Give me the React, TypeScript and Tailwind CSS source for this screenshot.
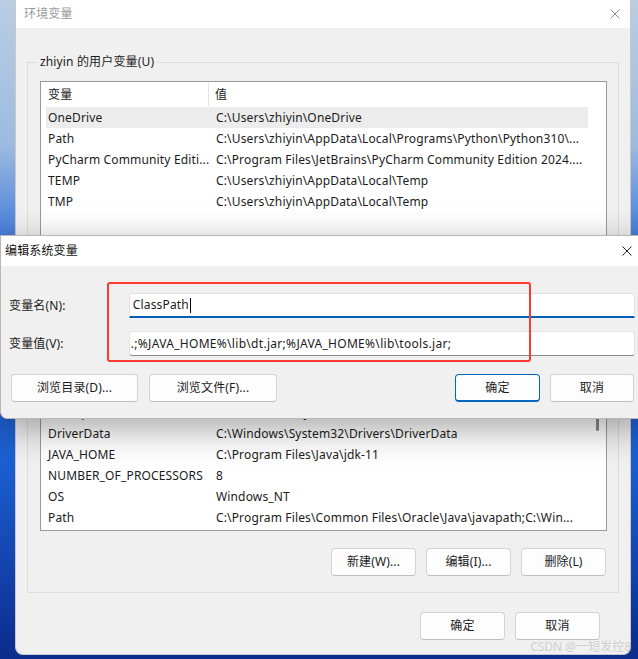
import React from "react";

const userVars: [string, string][] = [
  ["OneDrive", "C:\\Users\\zhiyin\\OneDrive"],
  ["Path", "C:\\Users\\zhiyin\\AppData\\Local\\Programs\\Python\\Python310\\..."],
  ["PyCharm Community Editi...", "C:\\Program Files\\JetBrains\\PyCharm Community Edition 2024...."],
  ["TEMP", "C:\\Users\\zhiyin\\AppData\\Local\\Temp"],
  ["TMP", "C:\\Users\\zhiyin\\AppData\\Local\\Temp"],
];

const systemVars: [string, string][] = [
  ["ComSpec", "C:\\WINDOWS\\system32\\cmd.exe"],
  ["DriverData", "C:\\Windows\\System32\\Drivers\\DriverData"],
  ["JAVA_HOME", "C:\\Program Files\\Java\\jdk-11"],
  ["NUMBER_OF_PROCESSORS", "8"],
  ["OS", "Windows_NT"],
  ["Path", "C:\\Program Files\\Common Files\\Oracle\\Java\\javapath;C:\\Win..."],
];

function CloseIcon({ color }: { color: string }) {
  return (
    <svg width="10" height="10" viewBox="0 0 10 10">
      <path d="M0.5 0.5 L9.5 9.5 M9.5 0.5 L0.5 9.5" stroke={color} strokeWidth="1" />
    </svg>
  );
}

function WinButton({ label, primary, className }: { label: string; primary?: boolean; className?: string }) {
  return (
    <div
      className={
        "flex items-center justify-center rounded-[4px] bg-[#fdfdfd] text-[12px] text-[#1b1b1b] " +
        (primary
          ? "border border-[#0067c0] border-b-2 "
          : "border border-[#d3d3d3] border-b-[#bdbdbd] ") +
        (className ?? "")
      }
    >
      {label}
    </div>
  );
}

function VarList({
  rows,
  height,
  selected,
  scrollbar,
}: {
  rows: [string, string][];
  height: string;
  selected?: number;
  scrollbar?: boolean;
}) {
  return (
    <div className={"flex border border-[#9a9a9a] bg-white " + height}>
      <div className="flex w-[547px] flex-col overflow-hidden">
        <div className="flex h-[25px] shrink-0 items-center">
          <div className="w-[168px] border-r border-[#e3e3e3] pl-[7px] leading-[23px]">变量</div>
          <div className="pl-[6px]">值</div>
        </div>
        {rows.map(([name, value], i) => (
          <div
            key={name + i}
            className={
              "ml-[5px] flex h-[21px] shrink-0 items-center whitespace-nowrap " +
              (i === selected ? "bg-[#ececec]" : "")
            }
          >
            <div className="w-[163px] shrink-0 pl-[2px]">{name}</div>
            <div className="overflow-hidden pl-[7px]">{value}</div>
          </div>
        ))}
      </div>
      <div className="flex w-[18px] justify-center">
        {scrollbar && <div className="mt-[3px] h-[51px] w-[3px] rounded-full bg-[#8a8a8a]" />}
      </div>
    </div>
  );
}

export default function App() {
  return (
    <div className="relative h-[659px] w-[638px] overflow-hidden bg-[linear-gradient(180deg,#b9cee2_0%,#9dbbe0_22%,#2a6bd8_40%,#1b5fd2_70%,#0b2c8c_100%)] font-['Noto_Sans','Noto_Sans_CJK_SC',sans-serif] text-[12px] tracking-[0.15px] text-[#1b1b1b]">
      {/* 环境变量 window */}
      <div className="ml-[15px] flex h-[655px] w-[616px] flex-col overflow-hidden rounded-b-[8px] border-x border-b border-[#c9c9c9] bg-[#f0f0f0]">
        <div className="flex h-[28px] shrink-0 items-center justify-between bg-white pl-[8px] pr-[10px]">
          <span className="text-[#9a9a9a]">环境变量</span>
          <CloseIcon color="#8c8c8c" />
        </div>

        <fieldset className="mx-[11px] mt-[26px] border border-[#dcdcdc] pb-[17px] pl-[12px] pr-[11px]">
          <legend className="ml-[-3px] px-[3px] leading-[16px]">zhiyin 的用户变量(U)</legend>
          <div className="mt-[11px]">
            <VarList rows={userVars} height="h-[203px]" selected={0} />
          </div>
          <div className="mt-[18px] flex justify-end gap-[10px] pr-[1px]">
            <WinButton label="新建(N)..." className="h-[27px] w-[85px]" />
            <WinButton label="编辑(E)..." className="h-[27px] w-[85px]" />
            <WinButton label="删除(D)" className="h-[27px] w-[85px]" />
          </div>
        </fieldset>

        <fieldset className="mx-[11px] mt-[2px] border border-[#dcdcdc] pb-[16px] pl-[12px] pr-[11px]">
          <legend className="ml-[-3px] px-[3px] leading-[16px]">系统变量(S)</legend>
          <div className="mt-[11px]">
            <VarList rows={systemVars} height="h-[155px]" scrollbar />
          </div>
          <div className="mt-[17px] flex justify-end gap-[10px] pr-[1px]">
            <WinButton label="新建(W)..." className="h-[28px] w-[85px]" />
            <WinButton label="编辑(I)..." className="h-[28px] w-[85px]" />
            <WinButton label="删除(L)" className="h-[28px] w-[85px]" />
          </div>
        </fieldset>

        <div className="mt-[19px] flex justify-end gap-[10px] pr-[30px]">
          <WinButton label="确定" className="h-[28px] w-[85px]" />
          <WinButton label="取消" className="h-[28px] w-[85px]" />
        </div>
      </div>

      {/* 编辑系统变量 dialog */}
      <div className="absolute left-0 top-[235px] w-[650px] overflow-hidden rounded-b-[7px] border border-[#b8b8b8] bg-[#f0f0f0] shadow-[0_10px_36px_rgba(0,0,0,0.35)]">
        <div className="flex h-[30px] items-center justify-between bg-white pl-[4px] pr-[17px]">
          <span className="text-[#111]">编辑系统变量</span>
          <CloseIcon color="#222" />
        </div>
        <div className="relative pb-[16px] pl-[8px] pr-[14px] pt-[27px]">
          <div className="flex items-center">
            <div className="w-[120px]">变量名(N):</div>
            <div className="flex h-[25px] w-[507px] items-center rounded-t-[3px] border border-b-2 border-[#e3e3e3] border-b-[#005fb8] bg-white pl-[3px]">
              ClassPath
              <span className="ml-[1px] inline-block h-[15px] w-[1px] bg-black" />
            </div>
          </div>
          <div className="mt-[13px] flex items-center">
            <div className="w-[120px]">变量值(V):</div>
            <div className="flex h-[25px] w-[507px] items-center whitespace-nowrap rounded-[3px] border border-[#e3e3e3] border-b-[#8a8a8a] bg-white pl-[1px] tracking-[0.3px]">
              .;%JAVA_HOME%\lib\dt.jar;%JAVA_HOME%\lib\tools.jar;
            </div>
          </div>
          <div className="mt-[18px] flex items-center">
            <WinButton label="浏览目录(D)..." className="ml-[2px] h-[28px] w-[127px]" />
            <WinButton label="浏览文件(F)..." className="ml-[11px] h-[28px] w-[128px]" />
            <WinButton label="确定" primary className="ml-[178px] h-[28px] w-[85px]" />
            <WinButton label="取消" className="ml-[10px] h-[28px] w-[84px]" />
          </div>
          {/* red annotation box */}
          <div className="absolute left-[106px] top-[16px] h-[80px] w-[424px] rounded-[3px] border-2 border-[#ff3b30]" />
        </div>
      </div>

      <div className="absolute bottom-[3px] right-[7px] text-[12px] tracking-normal text-[rgba(200,200,200,0.85)]">CSDN @一短发控8</div>
    </div>
  );
}
